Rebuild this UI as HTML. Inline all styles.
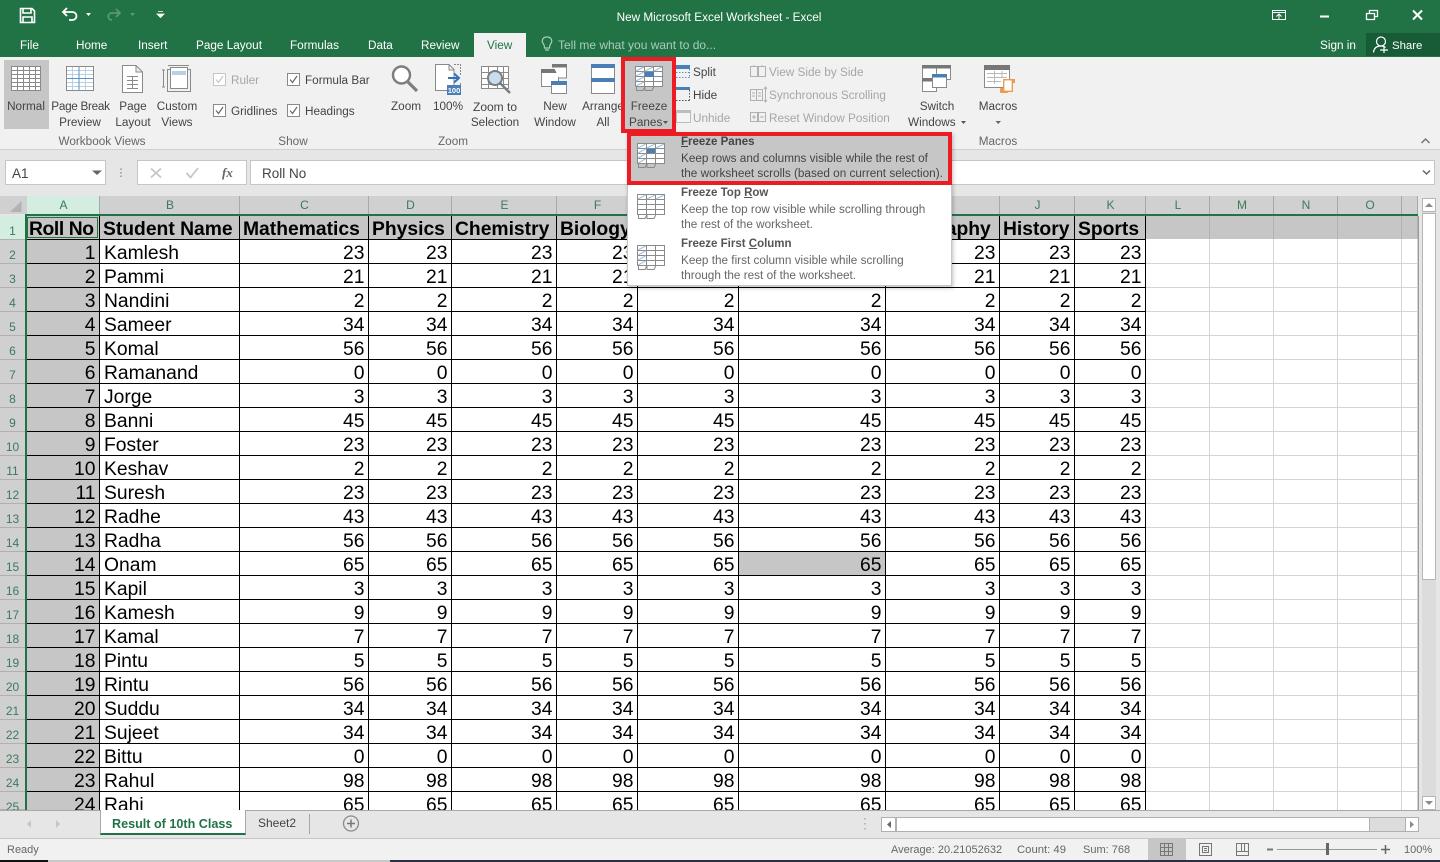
<!DOCTYPE html>
<html><head><meta charset="utf-8"><title>New Microsoft Excel Worksheet - Excel</title>
<style>
html,body{margin:0;padding:0}
body{width:1440px;height:862px;overflow:hidden;position:relative;background:#e6e6e6;font:11.75px/16px "Liberation Sans",sans-serif;color:#444}
.b{position:absolute}
.t{position:absolute;white-space:nowrap;line-height:16px;margin-top:1px}
.c{position:absolute;white-space:nowrap;line-height:16px;text-align:center;transform:translateX(-50%);margin-top:1px}
.n{margin-top:0}
.w{color:#fff}
.g{color:#666}
.d{color:#a6a6a6}
#sheet{position:absolute;left:26px;top:216px;width:1392px;height:594px;overflow:hidden;background:#fff}
table{border-collapse:separate;border-spacing:0;table-layout:fixed;width:1391px;margin-left:1px;font:19.3px/19px "Liberation Sans",sans-serif;color:#000}
td{height:24px;box-sizing:border-box;padding:4px 3.5px 0 0;text-align:right;border-right:1px solid #000;border-bottom:1px solid #000;overflow:hidden;white-space:nowrap;vertical-align:top}
td.a{background:#c6c6c6}
td.l{text-align:left;padding:4px 0 0 4px}
tr.h td{background:#c6c6c6;font-weight:bold;text-align:left;padding:4px 0 0 3px}
tr.h td:first-child{padding-left:2px;letter-spacing:-.4px}
tr.h td.e{border-right:1px solid #b2b2b2;border-bottom:1px solid #fff}
td.e{border-right:1px solid #d4d4d4;border-bottom:1px solid #d4d4d4;background:#fff}
td.s{background:#c6c6c6}
.ch{position:absolute;top:196px;height:18px;background:#d0d0d0;border-right:1px solid #a8a8a8;box-sizing:border-box;text-align:center;line-height:19px;color:#3c7a5a;font-size:12px;transform:translateX(1px);padding-left:1px}
.rh{position:absolute;left:0;width:25px;height:24px;box-sizing:border-box;background:#d0d0d0;border-bottom:1px solid #b0b0b0;text-align:center;line-height:31px;color:#3c7a5a;font-size:12px}
</style></head><body>

<div class="b" style="left:0;top:0;width:1440px;height:57px;background:#217346"></div>
<div class="b" style="left:474px;top:33px;width:52px;height:24px;background:#f1f1f1"></div>
<div class="b" style="left:1366px;top:33px;width:74px;height:23px;background:#185c37"></div>
<div class="b" style="left:0;top:57px;width:1440px;height:92px;background:#f1f1f1"></div>
<div class="b" style="left:0;top:149px;width:1440px;height:1px;background:#d0d0d0"></div>
<div class="b" style="left:4px;top:60px;width:45px;height:69px;background:#c6c6c6"></div>
<div class="b" style="left:625px;top:61px;width:47px;height:68px;background:#c6c6c6"></div>

<div class="c w" style="left:719px;top:9px">New Microsoft Excel Worksheet - Excel</div>
<div class="t w n" style="left:20px;top:38px">File</div>
<div class="t w" style="left:76px;top:37px">Home</div>
<div class="t w" style="left:138px;top:37px">Insert</div>
<div class="t w" style="left:196px;top:37px">Page Layout</div>
<div class="t w" style="left:290px;top:37px">Formulas</div>
<div class="t w" style="left:368px;top:37px">Data</div>
<div class="t w" style="left:421px;top:37px">Review</div>
<div class="t" style="left:487px;top:37px;color:#217346">View</div>
<div class="t n" style="left:558px;top:37px;color:#a9cdb9;font-size:12px">Tell me what you want to do...</div>
<div class="t w" style="left:1320px;top:37px">Sign in</div>
<div class="t w" style="left:1392px;top:37px;font-size:11.4px">Share</div>

<div class="c" style="left:26px;top:98px">Normal</div>
<div class="c" style="left:80.500px;top:98px;letter-spacing:-.3px">Page Break</div><div class="c" style="left:80px;top:114px">Preview</div>
<div class="c" style="left:133px;top:98px">Page</div><div class="c" style="left:133px;top:114px">Layout</div>
<div class="c" style="left:177px;top:98px">Custom</div><div class="c" style="left:177px;top:114px">Views</div>
<div class="c g" style="left:102px;top:133px">Workbook Views</div>
<div class="t d" style="left:231px;top:72px">Ruler</div>
<div class="t" style="left:305px;top:72px">Formula Bar</div>
<div class="t" style="left:231px;top:103px">Gridlines</div>
<div class="t" style="left:305px;top:103px">Headings</div>
<div class="c g" style="left:293px;top:133px">Show</div>
<div class="c" style="left:406px;top:98px">Zoom</div>
<div class="c" style="left:448px;top:98px">100%</div>
<div class="c" style="left:495px;top:98px;font-size:12px">Zoom to</div><div class="c" style="left:495px;top:114px">Selection</div>
<div class="c g" style="left:453px;top:133px">Zoom</div>
<div class="c" style="left:555px;top:98px">New</div><div class="c" style="left:555px;top:114px">Window</div>
<div class="c" style="left:603px;top:98px">Arrange</div><div class="c" style="left:603px;top:114px">All</div>
<div class="c" style="left:649px;top:98px">Freeze</div><div class="t" style="left:629px;top:114px">Panes</div>
<div class="t" style="left:693px;top:64px">Split</div>
<div class="t" style="left:693px;top:87px">Hide</div>
<div class="t d" style="left:693px;top:110px">Unhide</div>
<div class="t d" style="left:769px;top:64px">View Side by Side</div>
<div class="t d" style="left:769px;top:87px">Synchronous Scrolling</div>
<div class="t d" style="left:769px;top:110px">Reset Window Position</div>
<div class="c" style="left:937px;top:98px">Switch</div><div class="t" style="left:908px;top:114px">Windows</div>
<div class="c" style="left:998px;top:98px">Macros</div>
<div class="c g" style="left:998px;top:133px">Macros</div>

<div class="b" style="left:5px;top:160px;width:101px;height:25px;box-sizing:border-box;background:#fff;border:1px solid #c6c6c6"></div>
<div class="b" style="left:137px;top:160px;width:110px;height:25px;box-sizing:border-box;background:#fff;border:1px solid #c6c6c6"></div>
<div class="b" style="left:250px;top:160px;width:1185px;height:25px;box-sizing:border-box;background:#fff;border:1px solid #c6c6c6"></div>
<div class="t n" style="left:12px;top:166px;font-size:13.5px">A1</div>
<div class="t n" style="left:262px;top:166px;font-size:13.5px">Roll No</div>
<div class="t n" style="left:222px;top:165px;font:italic bold 13px/16px 'Liberation Serif',serif;color:#666">fx</div>

<div class="b" style="left:0;top:196px;width:27px;height:18px;background:#d0d0d0"></div>
<div class="ch" style="left:26px;width:73px;background:#d3ede0">A</div>
<div class="ch" style="left:99px;width:140px">B</div>
<div class="ch" style="left:239px;width:129px">C</div>
<div class="ch" style="left:368px;width:83px">D</div>
<div class="ch" style="left:451px;width:105px">E</div>
<div class="ch" style="left:556px;width:81px">F</div>
<div class="ch" style="left:637px;width:101px">G</div>
<div class="ch" style="left:738px;width:147px">H</div>
<div class="ch" style="left:885px;width:114px">I</div>
<div class="ch" style="left:999px;width:75px">J</div>
<div class="ch" style="left:1074px;width:71px">K</div>
<div class="ch" style="left:1145px;width:64px">L</div>
<div class="ch" style="left:1209px;width:64px">M</div>
<div class="ch" style="left:1273px;width:64px">N</div>
<div class="ch" style="left:1337px;width:64px">O</div>
<div class="ch" style="left:1401px;width:16px"></div>

<div class="rh" style="top:216px;background:#d3ede0">1</div>
<div class="rh" style="top:240px">2</div><div class="rh" style="top:264px">3</div><div class="rh" style="top:288px">4</div>
<div class="rh" style="top:312px">5</div><div class="rh" style="top:336px">6</div><div class="rh" style="top:360px">7</div>
<div class="rh" style="top:384px">8</div><div class="rh" style="top:408px">9</div><div class="rh" style="top:432px">10</div>
<div class="rh" style="top:456px">11</div><div class="rh" style="top:480px">12</div><div class="rh" style="top:504px">13</div>
<div class="rh" style="top:528px">14</div><div class="rh" style="top:552px">15</div><div class="rh" style="top:576px">16</div>
<div class="rh" style="top:600px">17</div><div class="rh" style="top:624px">18</div><div class="rh" style="top:648px">19</div>
<div class="rh" style="top:672px">20</div><div class="rh" style="top:696px">21</div><div class="rh" style="top:720px">22</div>
<div class="rh" style="top:744px">23</div><div class="rh" style="top:768px">24</div><div class="rh" style="top:792px;height:18px">25</div>

<div id="sheet"><table>
<colgroup><col style="width:73px"><col style="width:140px"><col style="width:129px"><col style="width:83px"><col style="width:105px"><col style="width:81px"><col style="width:101px"><col style="width:147px"><col style="width:114px"><col style="width:75px"><col style="width:71px"><col style="width:64px"><col style="width:64px"><col style="width:64px"><col style="width:64px"><col style="width:16px"></colgroup>
<tr class="h"><td>Roll No<td>Student Name<td>Mathematics<td>Physics<td>Chemistry<td>Biology<td><td><td>Geography<td>History<td>Sports<td class=e><td class=e><td class=e><td class=e><td class=e></tr>
<tr><td class=a>1<td class=l>Kamlesh<td>23<td>23<td>23<td>23<td>23<td>23<td>23<td>23<td>23<td class=e><td class=e><td class=e><td class=e><td class=e></tr>
<tr><td class=a>2<td class=l>Pammi<td>21<td>21<td>21<td>21<td>21<td>21<td>21<td>21<td>21<td class=e><td class=e><td class=e><td class=e><td class=e></tr>
<tr><td class=a>3<td class=l>Nandini<td>2<td>2<td>2<td>2<td>2<td>2<td>2<td>2<td>2<td class=e><td class=e><td class=e><td class=e><td class=e></tr>
<tr><td class=a>4<td class=l>Sameer<td>34<td>34<td>34<td>34<td>34<td>34<td>34<td>34<td>34<td class=e><td class=e><td class=e><td class=e><td class=e></tr>
<tr><td class=a>5<td class=l>Komal<td>56<td>56<td>56<td>56<td>56<td>56<td>56<td>56<td>56<td class=e><td class=e><td class=e><td class=e><td class=e></tr>
<tr><td class=a>6<td class=l>Ramanand<td>0<td>0<td>0<td>0<td>0<td>0<td>0<td>0<td>0<td class=e><td class=e><td class=e><td class=e><td class=e></tr>
<tr><td class=a>7<td class=l>Jorge<td>3<td>3<td>3<td>3<td>3<td>3<td>3<td>3<td>3<td class=e><td class=e><td class=e><td class=e><td class=e></tr>
<tr><td class=a>8<td class=l>Banni<td>45<td>45<td>45<td>45<td>45<td>45<td>45<td>45<td>45<td class=e><td class=e><td class=e><td class=e><td class=e></tr>
<tr><td class=a>9<td class=l>Foster<td>23<td>23<td>23<td>23<td>23<td>23<td>23<td>23<td>23<td class=e><td class=e><td class=e><td class=e><td class=e></tr>
<tr><td class=a>10<td class=l>Keshav<td>2<td>2<td>2<td>2<td>2<td>2<td>2<td>2<td>2<td class=e><td class=e><td class=e><td class=e><td class=e></tr>
<tr><td class=a>11<td class=l>Suresh<td>23<td>23<td>23<td>23<td>23<td>23<td>23<td>23<td>23<td class=e><td class=e><td class=e><td class=e><td class=e></tr>
<tr><td class=a>12<td class=l>Radhe<td>43<td>43<td>43<td>43<td>43<td>43<td>43<td>43<td>43<td class=e><td class=e><td class=e><td class=e><td class=e></tr>
<tr><td class=a>13<td class=l>Radha<td>56<td>56<td>56<td>56<td>56<td>56<td>56<td>56<td>56<td class=e><td class=e><td class=e><td class=e><td class=e></tr>
<tr><td class=a>14<td class=l>Onam<td>65<td>65<td>65<td>65<td>65<td class=s>65<td>65<td>65<td>65<td class=e><td class=e><td class=e><td class=e><td class=e></tr>
<tr><td class=a>15<td class=l>Kapil<td>3<td>3<td>3<td>3<td>3<td>3<td>3<td>3<td>3<td class=e><td class=e><td class=e><td class=e><td class=e></tr>
<tr><td class=a>16<td class=l>Kamesh<td>9<td>9<td>9<td>9<td>9<td>9<td>9<td>9<td>9<td class=e><td class=e><td class=e><td class=e><td class=e></tr>
<tr><td class=a>17<td class=l>Kamal<td>7<td>7<td>7<td>7<td>7<td>7<td>7<td>7<td>7<td class=e><td class=e><td class=e><td class=e><td class=e></tr>
<tr><td class=a>18<td class=l>Pintu<td>5<td>5<td>5<td>5<td>5<td>5<td>5<td>5<td>5<td class=e><td class=e><td class=e><td class=e><td class=e></tr>
<tr><td class=a>19<td class=l>Rintu<td>56<td>56<td>56<td>56<td>56<td>56<td>56<td>56<td>56<td class=e><td class=e><td class=e><td class=e><td class=e></tr>
<tr><td class=a>20<td class=l>Suddu<td>34<td>34<td>34<td>34<td>34<td>34<td>34<td>34<td>34<td class=e><td class=e><td class=e><td class=e><td class=e></tr>
<tr><td class=a>21<td class=l>Sujeet<td>34<td>34<td>34<td>34<td>34<td>34<td>34<td>34<td>34<td class=e><td class=e><td class=e><td class=e><td class=e></tr>
<tr><td class=a>22<td class=l>Bittu<td>0<td>0<td>0<td>0<td>0<td>0<td>0<td>0<td>0<td class=e><td class=e><td class=e><td class=e><td class=e></tr>
<tr><td class=a>23<td class=l>Rahul<td>98<td>98<td>98<td>98<td>98<td>98<td>98<td>98<td>98<td class=e><td class=e><td class=e><td class=e><td class=e></tr>
<tr><td class=a>24<td class=l>Rahi<td>65<td>65<td>65<td>65<td>65<td>65<td>65<td>65<td>65<td class=e><td class=e><td class=e><td class=e><td class=e></tr>
</table></div>

<div class="b" style="left:27px;top:217px;width:71px;height:21px;box-sizing:border-box;border:1px solid #217346"></div>
<div class="b" style="left:25px;top:214px;width:1393px;height:2px;background:#217346"></div>
<div class="b" style="left:25px;top:214px;width:2px;height:596px;background:#217346"></div>
<div class="b" style="left:1418px;top:216px;width:1px;height:594px;background:#9a9a9a"></div>

<div class="b" style="left:1422px;top:198px;width:14px;height:612px;background:#dcdcdc"></div>
<div class="b" style="left:1422px;top:198px;width:14px;height:14px;box-sizing:border-box;background:#fff;border:1px solid #b5b5b5"></div>
<div class="b" style="left:1422px;top:213px;width:14px;height:367px;box-sizing:border-box;background:#fff;border:1px solid #b5b5b5"></div>
<div class="b" style="left:1422px;top:796px;width:14px;height:14px;box-sizing:border-box;background:#fff;border:1px solid #b5b5b5"></div>

<div class="b" style="left:0;top:810px;width:1440px;height:1px;background:#a8a8a8"></div>
<div class="b" style="left:100px;top:810px;width:146px;height:25px;box-sizing:border-box;background:#fff;border:1px solid #a8a8a8;border-top:0;border-bottom:2px solid #217346"></div>
<div class="t" style="left:112px;top:815px;font-weight:bold;font-size:12.6px;color:#217346">Result of 10th Class</div>
<div class="t n" style="left:258px;top:815px;font-size:12px">Sheet2</div>
<div class="b" style="left:309px;top:814px;width:1px;height:20px;background:#a8a8a8"></div>
<div class="b" style="left:881px;top:817px;width:538px;height:15px;box-sizing:border-box;background:#dcdcdc;border:1px solid #b0b0b0"></div>
<div class="b" style="left:896px;top:817px;width:474px;height:15px;box-sizing:border-box;background:#fff;border:1px solid #b0b0b0"></div>
<div class="b" style="left:1405px;top:817px;width:14px;height:15px;box-sizing:border-box;background:#fff;border:1px solid #b0b0b0"></div>
<div class="b" style="left:881px;top:817px;width:15px;height:15px;box-sizing:border-box;background:#fff;border:1px solid #b0b0b0"></div>

<div class="b" style="left:0;top:838px;width:1440px;height:1px;background:#c6c6c6"></div>
<div class="b" style="left:0;top:839px;width:1440px;height:21px;background:#f1f1f1"></div>
<div class="b" style="left:1148px;top:839px;width:38px;height:21px;background:#c6c6c6"></div>
<div class="b" style="left:0;top:860px;width:48px;height:2px;background:#111"></div>
<div class="b" style="left:48px;top:860px;width:342px;height:2px;background:#c8c8c8"></div>
<div class="b" style="left:390px;top:860px;width:1050px;height:2px;background:#2b3040"></div>
<div class="t g" style="left:7px;top:841px;font-size:11px">Ready</div>
<div class="t g" style="left:891px;top:841px;font-size:11px">Average: 20.21052632</div>
<div class="t g" style="left:1017px;top:841px;font-size:11.3px">Count: 49</div>
<div class="t g" style="left:1083px;top:841px;font-size:11px">Sum: 768</div>
<div class="t g" style="left:1404px;top:841px;font-size:11px">100%</div>

<svg class="b" style="left:0;top:0" width="1440" height="862" viewBox="0 0 1440 862" fill="none">
<defs>
<g id="grid"><rect x=".5" y=".5" width="27" height="20" fill="#fff" stroke="#8a8a8a"/><path d="M9.500 .5V20M18.500 .5V20M.5 5.500H27.500M.5 10.500H27.500M.5 15.500H27.500" stroke="#8a8a8a"/><path d="M1.500 20.500V24.500H8L10 20.500V24.500H17L19 20.500" stroke="#8a8a8a"/></g>
<g id="fz"><use href="#grid"/><path d="M1 5L8.500 1M10 5L18 1M19 5L27 1" stroke="#9dc0e0"/></g>
</defs>
<!-- QAT -->
<path d="M20.500 8.500H32L34.500 11V22.500H20.500Z" stroke="#fff" stroke-width="1.600"/><path d="M23 9V13H31V9M23 22V17H32V22" stroke="#fff" stroke-width="1.600"/>
<path d="M67 8L63 12L67 16M63.500 12H72C78 12 78 20 72 20H69" stroke="#fff" stroke-width="1.800"/>
<path d="M86 13H91L88.500 16Z" fill="#fff"/>
<path d="M116 9L120 13L116 17M119 13H112C107 13 107 20 112 20" stroke="#5b9877" stroke-width="1.800"/>
<path d="M130 13H135L132.500 16Z" fill="#5b9877"/>
<path d="M158 11.500H163M157 14H164L160.500 17.500Z" stroke="#fff" fill="#fff" stroke-width=".8"/>
<!-- window -->
<path d="M1272.500 10.500H1285.500V19.500H1272.500ZM1272.500 12.500H1285.500M1279 19V14.500M1276.500 16.500L1279 14L1281.500 16.500" stroke="#fff"/>
<path d="M1320 16.500H1329" stroke="#fff" stroke-width="2"/>
<path d="M1366.500 13.500H1374.500V19.500H1366.500ZM1369.500 13V10.500H1377.500V16.500H1375" stroke="#fff" stroke-width="1.300"/>
<path d="M1413 10.500L1422 19.500M1422 10.500L1413 19.500" stroke="#fff" stroke-width="2"/>
<path d="M543.500 44C541 41 542.500 37 547 37C551.500 37 553 41 550.500 44C549.500 45.500 549.500 46.500 549.500 48H544.500C544.500 46.500 544.500 45.500 543.500 44ZM545 50H549" stroke="#a9cdb9" stroke-width="1.200"/>
<circle cx="1381" cy="41.500" r="4.500" stroke="#fff" stroke-width="1.200"/><path d="M1373.500 52.500C1374 47.500 1377 46 1381 46C1383 46 1384.500 46.500 1385.500 47.500M1380 50H1388M1384 46.500V53" stroke="#fff" stroke-width="1.200"/>
<!-- Normal -->
<g stroke="#8a8a8a"><rect x="11.500" y="66.500" width="29" height="24" fill="#fff"/><path d="M17.500 67V90M23.500 67V90M29.500 67V90M35.500 67V90M11.500 70.500H40M11.500 74.500H40M11.500 78.500H40M11.500 82.500H40M11.500 86.500H40"/></g>
<!-- Page break -->
<rect x="66.500" y="66.500" width="27" height="24" fill="#fff" stroke="#8a8a8a"/><path d="M72.500 67V90M85.500 67V90M67 70.500H93M67 74.500H93M67 82.500H93M67 86.500H93" stroke="#b9cfe6"/><path d="M79 67V90M67 78.500H93" stroke="#5f92c4"/>
<!-- Page layout -->
<path d="M122.500 65.500H136L142.500 72V92.500H122.500ZM136 66V72H142" fill="#fff" stroke="#8a8a8a"/><path d="M127 76.500H138M127 80.500H138M127 84.500H138M127 88.500H138M132.500 76V88" stroke="#8a8a8a"/>
<!-- Custom views -->
<path d="M167.500 69.500H190.500V91.500H167.500Z" stroke="#8a8a8a"/><rect x="170.500" y="67.500" width="17" height="21" fill="#fff" stroke="#8a8a8a"/><rect x="172" y="71" width="14" height="4" fill="#b9cfe6"/><path d="M163.500 70V87M162 70H165M162 87H165M168 65.500H189" stroke="#8a8a8a"/>
<!-- checkboxes -->
<g fill="#fff" stroke-width="1"><rect x="213.500" y="73.500" width="12" height="12" stroke="#c6c6c6"/><rect x="287.500" y="73.500" width="12" height="12" stroke="#8a8a8a"/><rect x="213.500" y="104.500" width="12" height="12" stroke="#8a8a8a"/><rect x="287.500" y="104.500" width="12" height="12" stroke="#8a8a8a"/></g>
<path d="M216 79.500L218.500 82.500L223 76" stroke="#c6c6c6" stroke-width="1.200"/><path d="M290 79.500L292.500 82.500L297 76M216 110.500L218.500 113.500L223 107M290 110.500L292.500 113.500L297 107" stroke="#666" stroke-width="1.200"/>
<!-- Zoom -->
<circle cx="401.500" cy="75" r="8.500" fill="#fff" stroke="#7d7d7d" stroke-width="2.400"/><path d="M408 82L417 91" stroke="#7d7d7d" stroke-width="3.200"/>
<path d="M435.500 64.500H449L454 69.500V90.500H435.500ZM449 65V70H454" fill="#fff" stroke="#8a8a8a"/><path d="M454 64.500H460.500V76M460.500 83V85" stroke="#8a8a8a" stroke-dasharray="2 1"/><path d="M448 78H458M454 73.500L459 78L454 82.500" stroke="#2f75b5" stroke-width="2"/><rect x="447" y="85" width="14" height="10" fill="#4a7fb5"/><text x="454" y="93" font-family="Liberation Sans" font-size="7.500" font-weight="bold" fill="#fff" text-anchor="middle">100</text>
<!-- Zoom sel -->
<g stroke="#8a8a8a"><rect x="481.500" y="66.500" width="27" height="22" fill="#fff"/><path d="M481 72.500H508M481 78.500H508M481 84.500H508M488.500 67V88M497.500 67V88M503.500 67V88"/></g><circle cx="495" cy="78" r="7" fill="#c9ddf0" stroke="#7d7d7d" stroke-width="2"/><path d="M500 83L510 93" stroke="#7d7d7d" stroke-width="2.400"/>
<!-- New window -->
<path d="M541.500 70.500H558.500V86.500H541.500Z" fill="#fff" stroke="#8a8a8a"/><rect x="541" y="69" width="18" height="4" fill="#777"/><path d="M552.500 64.500H566.500V78H559" fill="#fff" stroke="#8a8a8a"/><rect x="552" y="64" width="15" height="3.500" fill="#777"/><rect x="551.500" y="81.500" width="15" height="12" fill="#fff" stroke="#8a8a8a"/><rect x="551" y="81" width="16" height="4" fill="#4a7fb5"/>
<!-- Arrange -->
<rect x="591.500" y="64.500" width="23" height="29" fill="#fff" stroke="#8a8a8a"/><rect x="591" y="64" width="24" height="4" fill="#4a7fb5"/><rect x="591" y="78" width="24" height="4" fill="#4a7fb5"/>
<!-- Freeze -->
<use href="#fz" x="635" y="66"/><rect x="645" y="72" width="9" height="5" fill="#4a7fb5"/><path d="M636 71L644 67M636 76L644 72M636 81L644 77M636 86L644 82" stroke="#9dc0e0"/>
<path d="M663 121H668L665.500 124Z" fill="#555"/>
<!-- Split hide unhide -->
<rect x="676" y="65" width="14" height="4" fill="#4a7fb5"/><path d="M676 72.500H690M689.500 69V77M676 77.500H690" stroke="#5f92c4" stroke-dasharray="1.500 1.500"/>
<rect x="676" y="87" width="14" height="3" fill="#4a7fb5"/><path d="M689.500 90V101M676 100.500H690" stroke="#555" stroke-dasharray="1.500 1.500"/>
<rect x="676.500" y="110.500" width="14" height="12" fill="#f4f4f4" stroke="#bdbdbd"/><rect x="676" y="110" width="15" height="3" fill="#bdbdbd"/>
<!-- View side -->
<g stroke="#b0b0b0"><path d="M750.500 66.500H757.500V76.500H750.500ZM758.500 66.500H765.500V76.500H758.500ZM754 65V67M762 65V67"/><path d="M750.500 89.500H762.500V100.500H750.500ZM756.500 90V100M752 93H755M752 96H755M758 93H761M758 96H761M765.500 87V102M764 89L765.500 87L767 89M764 100L765.500 102L767 100"/><path d="M750.500 112.500H757.500V121.500H750.500ZM758.500 112.500H765.500V121.500H758.500ZM752 117H756M754 115V119M760 117H764"/></g>
<!-- Switch -->
<rect x="922.500" y="65.500" width="14" height="14" fill="#fff" stroke="#8a8a8a"/><rect x="922" y="65" width="15" height="3.500" fill="#777"/><rect x="936.500" y="65.500" width="14" height="14" fill="#fff" stroke="#8a8a8a"/><rect x="936" y="65" width="15" height="3.500" fill="#777"/><rect x="922.500" y="78.500" width="14" height="13" fill="#fff" stroke="#8a8a8a"/><rect x="922" y="78" width="15" height="3.500" fill="#777"/><rect x="932.500" y="74.500" width="14" height="13" fill="#fff" stroke="#8a8a8a"/><rect x="932" y="74" width="15" height="3.500" fill="#4a7fb5"/>
<path d="M961 121H966L963.500 124Z" fill="#555"/>
<!-- Macros -->
<rect x="984.500" y="65.500" width="25" height="22" fill="#fff" stroke="#8a8a8a"/><rect x="984" y="65" width="26" height="5" fill="#777"/><path d="M987 73.500H1007M987 77.500H1007M987 81.500H1001M994.500 71V84M1002 71V78" stroke="#b8b8b8"/><rect x="1012" y="79" width="3" height="4" fill="#ed9a4a"/><rect x="1000" y="88" width="8" height="5" rx="1" fill="#ed9a4a"/><rect x="1003.700" y="79.700" width="8.600" height="11.600" fill="#fff" stroke="#ed9a4a" stroke-width="1.400"/>
<path d="M995.500 121H1001L998.250 124Z" fill="#666"/>
<path d="M1421.500 143L1425.500 139L1429.500 143" stroke="#777" stroke-width="1.500"/>
<!-- formula -->
<path d="M92 170.500H102L97 175Z" fill="#666"/>
<path d="M121 168.500V170M121 172V173.500M121 175.500V177" stroke="#aaa" stroke-width="2"/>
<path d="M151 168.500L161 177.500M161 168.500L151 177.500" stroke="#c6c6c6" stroke-width="1.800"/>
<path d="M186.500 173L190.500 177.500L198 168" stroke="#c6c6c6" stroke-width="1.800"/>
<path d="M1423 170.500L1426.500 174L1430 170.500" stroke="#666" stroke-width="1.500"/>
<path d="M21.500 212H10L21.500 201Z" fill="#b2b2b2"/>
<!-- scroll arrows -->
<path d="M1425 207H1433L1429 203Z" fill="#8a8a8a"/><path d="M1425 801H1433L1429 805Z" fill="#8a8a8a"/>
<path d="M891 821V828L887 824.500Z" fill="#666"/><path d="M1410 821V828L1414 824.500Z" fill="#8a8a8a"/>
<path d="M31 820V828L27 824Z" fill="#c6c6c6"/><path d="M56 820V828L60 824Z" fill="#c6c6c6"/>
<circle cx="351" cy="823.500" r="7.500" stroke="#8a8a8a" stroke-width="1.300"/><path d="M351 819.500V827.500M347 823.500H355" stroke="#777" stroke-width="1.500"/>
<path d="M865 818V819.500M865 823V824.500M865 828V829.500" stroke="#bbb" stroke-width="2"/>
<!-- status -->
<g stroke="#777"><path d="M1160.500 843.500H1172.500V855.500H1160.500ZM1164.500 844V855M1168.500 844V855M1161 847.500H1172M1161 851.500H1172"/><path d="M1199.500 843.500H1211.500V855.500H1199.500ZM1202.500 846.500H1208.500V852.500H1202.500ZM1204 848.500H1207M1204 850.500H1207"/><path d="M1236.500 843.500H1248.500V855.500H1236.500ZM1236.500 851.500H1248.500M1241.500 844V851M1244.500 844V851"/></g>
<path d="M1267 849.500H1273" stroke="#777" stroke-width="2"/><path d="M1277 849.500H1377" stroke="#999"/><rect x="1326" y="843" width="3" height="12" fill="#666"/><path d="M1381 849.500H1390M1385.500 845V854" stroke="#666" stroke-width="1.500"/>
</svg>

<!-- dropdown -->
<div class="b" style="left:627px;top:132px;width:325px;height:154px;box-sizing:border-box;background:#fff;border:1px solid #c6c6c6;box-shadow:1px 2px 4px rgba(0,0,0,.25)"></div>
<div class="b" style="left:628px;top:133px;width:323px;height:52px;background:#c6c6c6"></div>
<div class="t n" style="left:681px;top:134px;font-weight:bold;font-size:11.5px"><u>F</u>reeze Panes</div>
<div class="t" style="left:681px;top:150px;color:#444">Keep rows and columns visible while the rest of</div>
<div class="t" style="left:681px;top:165px;color:#444">the worksheet scrolls (based on current selection).</div>
<div class="t n" style="left:681px;top:185px;font-weight:bold;font-size:11.5px;color:#555">Freeze Top <u>R</u>ow</div>
<div class="t" style="left:681px;top:201px;color:#666">Keep the top row visible while scrolling through</div>
<div class="t" style="left:681px;top:216px;color:#666">the rest of the worksheet.</div>
<div class="t n" style="left:681px;top:236px;font-weight:bold;font-size:11.5px;color:#555">Freeze First <u>C</u>olumn</div>
<div class="t" style="left:681px;top:252px;color:#666">Keep the first column visible while scrolling</div>
<div class="t" style="left:681px;top:267px;color:#666">through the rest of the worksheet.</div>
<svg class="b" style="left:630px;top:135px" width="40" height="145" viewBox="0 0 40 145" fill="none">
<g transform="translate(7,8)"><use href="#fz"/><rect x="10" y="6" width="8" height="4" fill="#4a7fb5"/><path d="M1 10L8.500 6M1 15L8.500 11M1 20L8.500 16" stroke="#9dc0e0"/></g>
<g transform="translate(7,59)"><use href="#fz"/></g>
<g transform="translate(7,110)"><use href="#grid"/><path d="M1 5L8.500 1M1 10L8.500 6M1 15L8.500 11M1 20L8.500 16" stroke="#9dc0e0"/></g>
</svg>
<!-- red highlights -->
<div class="b" style="left:621px;top:57px;width:55px;height:76px;box-sizing:border-box;border:4px solid #ed1c24"></div>
<div class="b" style="left:627px;top:132px;width:325px;height:53px;box-sizing:border-box;border:4px solid #ed1c24"></div>
</body></html>
